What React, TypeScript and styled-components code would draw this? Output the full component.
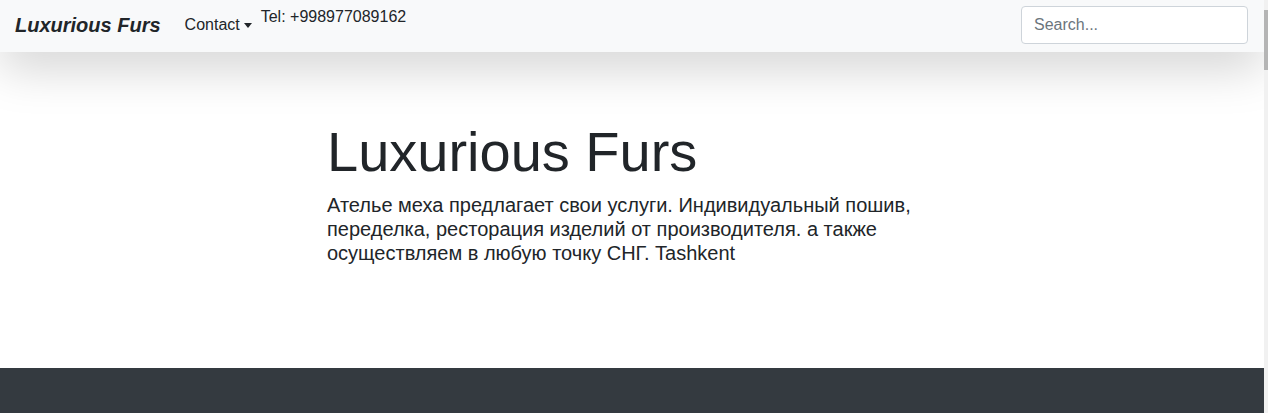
import React from "react";
import styled, { createGlobalStyle } from "styled-components";

const GlobalStyle = createGlobalStyle`
  html, body { margin: 0; padding: 0; }
  html { overflow: hidden; }
  body {
    font-family: "Liberation Sans", Arial, sans-serif;
    color: #212529;
    background: #fff;
    font-size: 16px;
    line-height: 1.5;
  }
  * { box-sizing: border-box; }
`;

const Page = styled.div`
  width: calc(100vw - 4px);
`;

const ScrollTrack = styled.div`
  position: fixed;
  top: 0;
  right: 0;
  width: 4px;
  height: 100vh;
  background: #f1f1f1;
  z-index: 10;
`;

const ScrollThumb = styled.div`
  margin-top: 10px;
  width: 100%;
  height: 60px;
  background: #b5b5b5;
`;

const Navbar = styled.nav`
  position: relative;
  z-index: 2;
  display: flex;
  align-items: center;
  height: 52px;
  padding: 6px 16px 8px 15px;
  background: #f8f9fa;
  box-shadow: 0 16px 48px rgba(0, 0, 0, 0.175);
`;

const Brand = styled.a`
  font-size: 20px;
  line-height: 30px;
  font-weight: 700;
  font-style: italic;
  color: #212529;
  text-decoration: none;
  margin-right: 16px;
`;

const NavLink = styled.a`
  display: flex;
  align-items: center;
  padding: 8px;
  font-size: 16px;
  line-height: 24px;
  color: #212529;
  text-decoration: none;
  &::after {
    content: "";
    display: inline-block;
    margin-left: 4px;
    border-top: 5px solid #212529;
    border-right: 4.5px solid transparent;
    border-left: 4.5px solid transparent;
    margin-top: 1px;
  }
`;

const Phone = styled.span`
  align-self: flex-start;
  margin-top: -1px;
  margin-left: 1px;
  font-size: 16px;
  line-height: 24px;
  color: #212529;
`;

const Spacer = styled.div`
  flex: 1;
`;

const Search = styled.input`
  width: 227px;
  height: 38px;
  padding: 6px 12px;
  font-family: inherit;
  font-size: 16px;
  color: #495057;
  background: #fff;
  border: 1px solid #ced4da;
  border-radius: 4px;
  outline: none;
  &::placeholder { color: #6c757d; }
`;

const Hero = styled.section`
  padding: 66px 0 87px;
  background: #fff;
`;

const Container = styled.div`
  width: 610px;
  margin: 0 auto;
`;

const Title = styled.h1`
  margin: 0 0 8px;
  font-size: 56px;
  line-height: 1.2;
  font-weight: 300;
  color: #212529;
`;

const Lead = styled.p`
  margin: 0 0 16px;
  font-size: 20px;
  line-height: 24px;
  font-weight: 300;
  color: #212529;
`;

const Footer = styled.footer`
  height: 2400px;
  background: #343a40;
`;

export default function App() {
  return (
    <>
      <GlobalStyle />
      <Page>
        <Navbar>
          <Brand href="#">Luxurious Furs</Brand>
          <NavLink href="#">Contact</NavLink>
          <Phone>Tel: +998977089162</Phone>
          <Spacer />
          <Search type="search" placeholder="Search..." />
        </Navbar>
        <Hero>
          <Container>
            <Title>Luxurious Furs</Title>
            <Lead>
              Ателье меха предлагает свои услуги. Индивидуальный пошив, переделка,
              ресторация изделий от производителя. а также осуществляем в любую
              точку СНГ. Tashkent
            </Lead>
          </Container>
        </Hero>
        <Footer />
      </Page>
      <ScrollTrack>
        <ScrollThumb />
      </ScrollTrack>
    </>
  );
}
